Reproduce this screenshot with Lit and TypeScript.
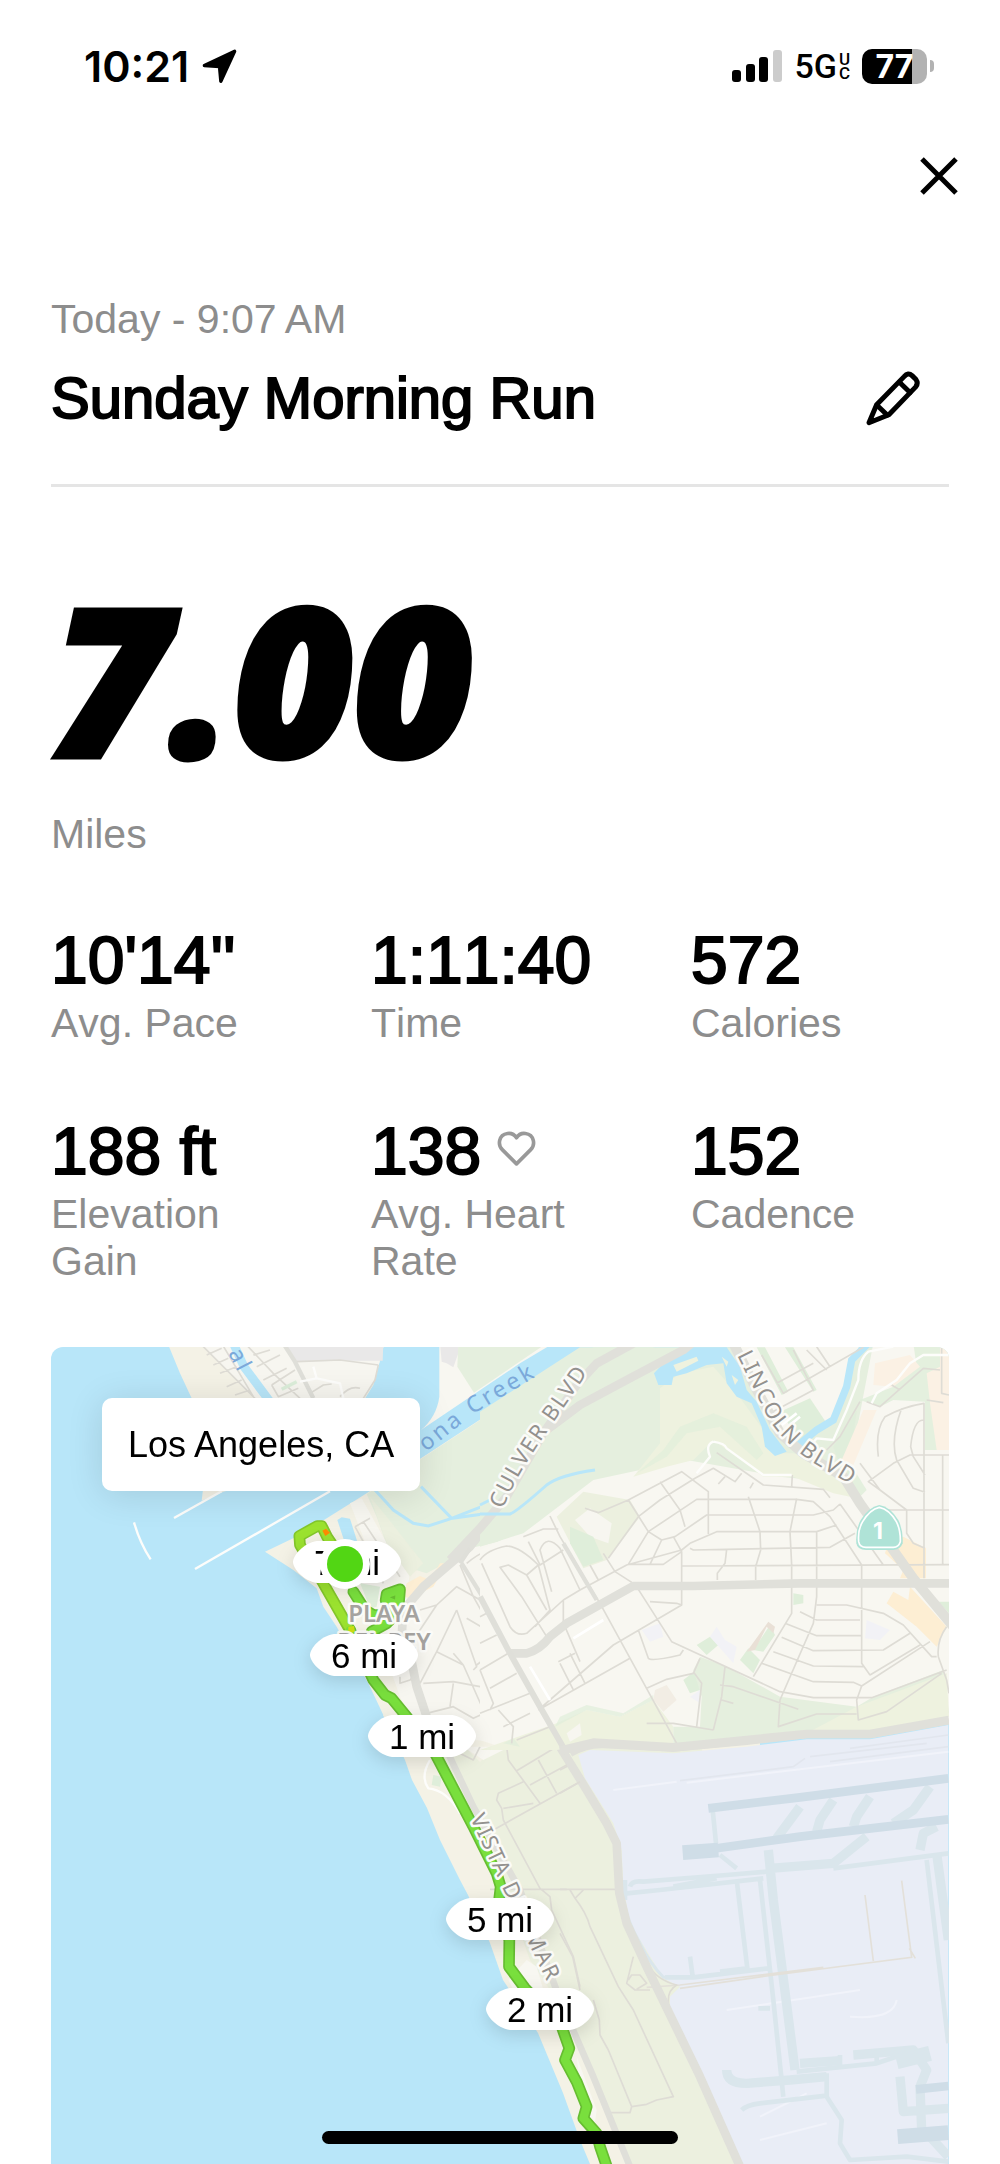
import { LitElement, html, css, svg } from "lit";
import { customElement } from "lit/decorators.js";

interface Stat {
  value: string;
  label: string;
  heart?: boolean;
}

const STATS: Stat[] = [
  { value: "10'14''", label: "Avg. Pace" },
  { value: "1:11:40", label: "Time" },
  { value: "572", label: "Calories" },
  { value: "188 ft", label: "Elevation Gain" },
  { value: "138", label: "Avg. Heart Rate", heart: true },
  { value: "152", label: "Cadence" },
];

interface Pin {
  x: number;
  y: number;
  text: string;
}

const PINS: Pin[] = [
  { x: 347, y: 1562, text: "7 mi" },
  { x: 364, y: 1655, text: "6 mi" },
  { x: 422, y: 1736, text: "1 mi" },
  { x: 500, y: 1919, text: "5 mi" },
  { x: 540, y: 2009, text: "2 mi" },
];

@customElement("run-map")
export class RunMap extends LitElement {
  static styles = css`
    :host {
      display: block;
      position: relative;
      overflow: hidden;
      border-radius: 12px 12px 0 0;
      background: #b8e6f9;
      font-family: "Liberation Sans", Arial, sans-serif;
    }
    .canvas {
      position: absolute;
      inset: 0;
      width: 100%;
      height: 100%;
    }
    .place {
      position: absolute;
      left: 51px;
      top: 51px;
      padding: 24px 26px;
      border-radius: 10px;
      background: #fff;
      box-shadow: 0 4px 36px rgba(0, 0, 0, 0.12);
      font-size: 36px;
      line-height: 45px;
      color: #000;
    }
    .land { fill: #f8f7f1; }
    .block { fill: #f7f6f0; }
    .sand { fill: #f4f2e6; }
    .marsh { fill: #e5efde; }
    .scrub { fill: #ecf0df; }
    .hill { fill: #eef2df; }
    .park { fill: #dfeeda; }
    .shop { fill: #fdeed3; }
    .school { fill: #fbf1e4; }
    .grey { fill: #e9e8e8; }
    .lilac { fill: #f2f2f6; }
    .water { fill: #b8e6f9; }
    .airport { fill: #e9edf6; }
    .stream { fill: none; stroke: #b8e6f9; }
    .minor { fill: none; stroke: #dedcd5; stroke-width: 5; stroke-linejoin: round; }
    .medium { fill: none; stroke: #dfdfd9; stroke-width: 13; stroke-linejoin: round; }
    .major { fill: none; stroke: #e0e0da; stroke-width: 26; stroke-linejoin: round; }
    .white { fill: none; stroke: #fdfdfb; stroke-width: 7; stroke-linejoin: round; }
    .taxi { fill: none; stroke: #dae6ec; stroke-linejoin: round; }
    .runway { fill: none; stroke: #cfdde7; }
    .service { fill: none; stroke: #e3e0d9; stroke-width: 5; }
    .route-edge { fill: none; stroke: #66bd31; stroke-width: 35; stroke-linejoin: round; stroke-linecap: round; }
    .route { fill: none; stroke: #79df3d; stroke-width: 25; stroke-linejoin: round; stroke-linecap: round; }
    .lime { stroke: #9be22f; }
    .lime-edge { stroke: #83c62a; }
    .label {
      font-family: "Noto Sans", sans-serif;
      font-size: 22px;
      letter-spacing: 2px;
      fill: #93918e;
      paint-order: stroke;
      stroke: #fbfbf8;
      stroke-width: 5px;
      stroke-linejoin: round;
    }
    .town { font-weight: 600; font-size: 24px; letter-spacing: 0; fill: #a5a3a0; }
    .river { fill: #7ba9da; stroke: none; font-size: 23px; letter-spacing: 3px; }
    .shield { font-family: Inter, sans-serif; font-weight: 700; font-size: 23px; fill: #fff; }
    .pin { fill: #fff; }
    .pins { filter: drop-shadow(0 5px 9px rgba(0, 0, 0, 0.13)); }
    .pin-text { font-size: 35px; fill: #000; text-anchor: middle; }
  `;

  private north() {
    return svg`
      <g transform="translate(40 1330) scale(.33333)">
        <path class="sand" d="M383 40L420 130L455 205L505 380L490 470L485 512L550 485L870 400L960 230L1000 165L1015 110L1033 40Z"/>
        <path class="block" d="M480 40L650 210L800 300L970 210L1000 160L1015 110L1033 40Z"/>
        <path class="grey" d="M735 40H1030L1028 92L900 92L770 95Z"/>
        <path class="stream" stroke-width="26" d="M580 40L612 110L690 215"/>
        <path class="minor" d="M480 40L650 210M545 40L640 200M615 40L700 130L780 205M500 75L545 55M520 105L565 85M540 130L590 110M560 170L605 150M585 195L630 180M640 75L690 60M650 110L720 75M670 150L740 115M695 165L765 120M695 165L715 200L775 175M770 95L900 90L1015 105M810 190L850 165L875 162M900 200Q930 165 960 175M970 205L1005 150L1015 105"/>
        <path class="medium" d="M730 40L765 95L820 205"/>
        <path d="M725 178L770 155" stroke="#dceeda" stroke-width="10"/>
        <path class="white" d="M820 110L830 145L900 160L910 205M830 145L780 155"/>
        <path class="white" d="M402 564L545 484M465 717L870 484M282 577Q300 640 332 688"/>
        <path class="land" d="M1198 40V200Q1190 260 1143 300L1440 100L1540 40Z"/>
        <path class="grey" d="M1200 40H1255V70L1240 112L1220 100L1205 95Z"/>
        <path class="marsh" d="M1255 40L1252 110L1302 188L1520 40Z"/>
        <path class="sand" d="M675 665L780 615L980 490L1143 385L1440 190L1560 120V1200L1400 1250H1200L1060 1215L1030 1155L985 1060L930 960L890 890L850 830L830 775L760 720Z"/>
        <path class="marsh" d="M980 492L1143 387L1440 192L1660 52H2500V700L1440 640L1290 660L1160 730L1060 700L1010 560Z"/>
        <path class="block" d="M930 520L965 505L1040 640L1110 720L1100 810L1290 655L1440 620V1240L1300 1230L1150 1240L1080 1100L960 760L1000 700Z"/>
        <path class="scrub" d="M990 500L1040 560L1150 700L1110 740L1040 640Z"/>
        <path class="water" d="M892 570L905 562L930 566L955 645L915 640Z"/>
        <path class="shop" d="M1100 760L1140 738L1170 750L1200 700L1220 700L1180 770L1110 805L1090 800Z"/>
        <path class="park" d="M960 760L1020 770L1010 830L990 835Z"/>
        <path class="stream" stroke-width="9" d="M1005 480L1060 540L1120 580L1165 588L1235 565L1350 520M1143 470L1235 565L1330 552L1410 550L1440 535"/>
        <path class="minor" d="M945 590L990 565M945 590L1000 690L1030 760M970 575L1080 740M1260 705L1300 800L1440 1050M1280 700Q1340 650 1400 648L1440 660M1330 700Q1330 760 1380 830L1440 900M1140 840L1190 825L1250 770L1330 815M1190 825L1100 960M1250 840L1190 965L1140 1060M1250 840L1310 1010L1300 1020M1280 865L1400 935L1310 1005M1190 965L1270 1005L1330 1140M1240 970L1270 1005M1150 1060L1240 1055L1320 1070L1440 1000M1160 1150L1240 1130L1300 1165L1420 1110M1240 1060L1230 1130M1380 1060L1400 1160L1440 1190M1080 1040V1060L1110 1050L1130 1030"/>
        <path class="major" d="M1085 920L1090 840L1150 770L1290 650L1360 560L1480 430"/>
        <path class="medium" d="M1260 700L1290 655M1265 700L1340 820L1440 1000"/>
        <path class="major" d="M1110 970L1130 1070L1170 1190L1190 1260"/>
      </g>`;
  }

  private east() {
    return svg`
      <g transform="translate(480 1330) scale(.33333)">
        <path class="land" d="M0 660L150 590L340 430L620 390L900 440L1100 460L1180 40H1407V1170L1170 1212H980L580 1250L250 1240L60 1250L0 1230Z"/>
        <path class="marsh" d="M300 52H520L760 180L850 330L700 310L600 290L480 420L340 450L130 610L0 650V245Z"/>
        <path class="hill" d="M540 175L600 130L700 110L770 190L850 300L880 370L940 370L1010 390L1110 400L1110 500L1060 490L940 440L850 440L700 330L640 390L560 410L460 440L540 340Z"/>
        <path class="park" d="M470 430L550 360L600 290L700 250L800 290L850 370L830 390L720 290L620 310L560 380Z" opacity=".6"/>
        <path class="scrub" d="M230 560L310 485L450 510L480 560L380 690L310 715Z"/>
        <path class="block" d="M285 570L330 535L395 580L385 640L330 620Z"/>
        <path class="park" d="M270 590L340 620L370 690L310 710L270 640Z"/>
        <path class="land" d="M780 40H1140L1090 180L1040 290L940 330L870 250L800 130Z"/>
        <path class="park" d="M830 52L855 52L925 185L905 195ZM915 52L940 52L1010 180L1000 185Z"/>
        <path class="park" d="M900 245L990 205L1040 280L960 330Z"/>
        <path class="water" d="M600 52H740L780 110L800 180L830 215L870 300L920 365L885 378L855 350L845 290L815 220L770 200L740 160L730 100L680 105L620 130L580 140L575 165L535 165L522 130L550 100Z"/>
        <path class="hill" d="M580 105L650 80L655 92L590 125ZM725 80L745 95L740 110ZM755 135L775 150L765 165Z"/>
        <path class="stream" stroke-width="22" d="M1160 45L1115 90L1100 170L1060 270L1010 300L950 350"/>
        <path class="park" d="M1140 210L1200 230L1240 210L1335 215L1335 360H1407V40H1300L1310 110L1240 170ZM1060 350L1130 240L1110 400L1160 480L1140 500L1090 440Z" opacity=".8"/>
        <path class="school" d="M1185 100L1290 75L1320 110L1240 170L1180 165ZM1340 130L1380 110V52H1407V360H1370L1350 220ZM1150 240L1190 240L1120 405L1085 390Z"/>
        <path class="shop" d="M1230 620L1270 620L1338 655V745H1260L1270 720L1215 670ZM1220 820L1240 785L1285 810L1290 770L1400 890L1370 950L1310 890Z"/>
        <path class="park" d="M940 790L970 795V820L940 825ZM650 945L690 920L715 945L680 975ZM870 885L820 960L850 965L885 915ZM780 990L805 955L840 990L820 1030ZM610 1050L655 1015L660 1080L630 1090ZM1375 815H1407V850Z"/>
        <path d="M865 875L885 890L880 910L860 890L825 960L800 965Z" fill="#e9e0d6"/>
        <path class="lilac" d="M485 900L540 880L550 920L510 935ZM1160 870L1230 900L1200 930L1155 925ZM690 920L710 890L735 930L770 950L760 1000ZM630 1100L660 1080V1120Z"/>
        <path d="M525 1080L560 1065L590 1110L550 1145L520 1110Z" fill="#f2ede4"/>
        <path class="hill" d="M0 1260L230 1180L320 1140L420 1160L520 1110L580 1190V1250L340 1240L230 1260Z"/>
        <path class="park" d="M225 1190L320 1140L420 1160L520 1110L520 1095L430 1150L320 1125L240 1160ZM70 1240L100 1225L120 1250Z" opacity=".7"/>
        <path class="block" d="M260 1210L300 1180L305 1215L270 1235Z"/>
        <path class="marsh" d="M660 980L740 1010L900 1100L1130 1130L1180 1100L1390 1020L1407 1150L1180 1205L900 1220L580 1245L580 1190L660 1190L665 1100L640 1020Z"/>
        <path class="hill" d="M1130 1130L1400 1030L1407 1160L1140 1205L980 1210Z"/>

        <path class="minor" d="M210 558L240 620L360 820L590 1240M130 620L190 597H235M145 635L180 705L250 660M0 690Q20 660 80 648Q120 650 175 705L140 735L85 705L60 712L125 800L200 920M5 700L50 800L90 890Q110 920 140 910L250 810V890M175 705L210 840L165 890M215 785L180 660Q200 610 240 655L300 780L250 810M140 735L200 840M300 780L440 705L605 660L630 640L710 605H1010L1070 585M330 705L355 750M370 670L405 725L460 760M315 535L355 548L445 510L605 425L685 485V612M385 685L475 560L540 510L645 445M445 510L505 605L545 630L585 620L680 555H1000L1060 540L1080 522M540 455L600 540L615 590M445 703L505 605L650 508H950L1000 515L1050 560L1145 705V1000L1170 1035M510 703L545 630M445 703H550L605 665V825L400 945L175 1140M605 665L580 620M630 655L640 660L740 658L1050 652L1125 610M605 708L1407 704M740 658L735 700L712 730V750M645 445L700 415L765 455L785 430M710 368L850 465L1030 478L1050 503M715 462L735 440M810 475L820 458M805 500L840 605L842 660L827 710V750M950 505L930 605L935 705V850L820 1040M937 435L935 470M1010 605V800L1000 880L900 1110L895 1190L1010 1152H1130M1080 522L1210 705M1010 825H1100L1210 850L1270 885L1355 980H1370M960 845L1010 870H1140M915 880L1010 917H1145M905 922L1000 962L1210 960L1290 910M880 965L1000 1008L1150 1010M845 1000L1000 1055L1120 1057L1145 1068M475 778L575 935L900 1085L1000 1103H1175L1400 1020M475 900L505 985Q515 995 600 975L610 960M510 815L590 820L605 825M175 1140L450 985M300 995L255 890M235 995L285 970M240 1000L280 1080M270 970L315 1060M500 1075L560 1048L640 1030L660 985M640 1025L665 1060L650 1190M700 1200L725 1100L735 1010M500 1180L580 1180L700 1200M720 1065L760 1070L955 1138M725 1110L760 1120M1145 1068L1130 1110L1135 1170L1220 1145L1385 1030M1145 1068L1350 935M1170 1035L1320 945M1400 890Q1370 930 1375 980L1400 1050L1407 1090M1200 480L1165 455L1240 400L1290 375H1407M1195 380Q1185 300 1215 260Q1270 230 1332 220V745M1265 235Q1230 330 1250 390L1300 475L1335 487M1330 270Q1300 270 1292 350L1300 380L1335 435M1140 400L1200 480L1280 540V610L1300 640L1335 655M1200 540H1407M1388 375V703M845 75L910 190L1150 52M980 60L1040 120M1010 50L1050 110M890 160L1000 100M870 250L1000 180L940 60M1160 215L1200 230L1330 115L1380 120M1140 215L1080 320L1040 360M1385 52V190L1407 195M1340 210L1390 218M1235 165L1260 180M0 860L20 850M0 940L50 915M0 1020L85 970M30 1075L110 1030M0 1150L150 1090M55 1140L100 1190L95 1240M70 1190L150 1150M110 1230L210 1190M0 1020L40 1120L30 1140"/>
        <path class="white" d="M700 335Q735 340 740 355L850 435H935M700 335Q675 345 690 380L650 430M1407 75H1330L1290 100L1250 150L1190 190L1175 220M1240 50L1165 65Q1135 90 1135 150L1100 240L1060 330L1010 325L990 350"/>
        <path d="M905 285L950 250M930 285L960 260M280 925L370 870M150 1010L210 1110" stroke="#fff" stroke-width="8" fill="none"/>
        <path class="major" d="M-90 690L0 595L80 500L190 310L290 165L350 100L460 40M200 300L300 225L440 150L610 60L660 20"/>
        <path class="major" d="M760 40L820 160L900 310L970 370L1090 440L1140 520L1300 745L1420 890" style="stroke-width:30"/>
        <path class="major" d="M90 970H140Q180 960 210 920L260 880L460 768H640L960 760H1407"/>
        <path class="medium" d="M0 800L90 970L180 1130L260 1270" style="stroke-width:18"/>
        <path class="medium" d="M250 640L350 810"/>
        <path class="major" d="M240 1262L340 1238L580 1252L980 1212H1170L1407 1170"/>
        <path class="stream" stroke-width="9" d="M0 525L30 510M0 552H90Q110 545 200 465Q240 435 345 420"/>

        <path d="M1198 525Q1230 530 1255 570Q1270 600 1268 640Q1262 658 1240 660H1158Q1132 660 1129 640Q1126 600 1142 570Q1165 532 1198 525Z" fill="#afe3d7"/>
        <path d="M1198 532Q1228 538 1249 575Q1262 600 1261 635Q1256 651 1240 652H1158Q1139 652 1136 635Q1133 600 1148 575Q1170 538 1198 532Z" fill="none" stroke="#fff" stroke-width="5"/>
      </g>
      <text class="shield" x="873" y="1539">1</text>`;
  }

  private south() {
    return svg`
      <path class="sand" d="M383 1715L405 1760L412 1780L427 1808L440 1840L460 1880L468 1895L490 1943L503 1980L538 2033L563 2093L580 2140L590 2164H760V1715Z"/>
      <path class="scrub" d="M430 1747L458 1740L480 1762L500 1740L560 1735L700 1735L760 2170H632L570 2020L530 1960L505 1890L470 1820Z"/>
      <g transform="translate(560 1700) scale(.33333)">
        <path class="airport" d="M55 165L90 150L340 160L560 140L740 118H930L1165 75V1400H540L430 1150L330 960V890L360 860L310 835L210 670L190 560L185 450L160 370L75 235Z"/>
        <path fill="none" stroke="#e2e6ee" stroke-width="5" d="M360 242L700 200L735 175M810 185L1165 140M750 170L1100 130M870 145L1165 105"/>
        <path fill="none" stroke="#f1f3fa" stroke-width="6" d="M380 248L1165 155M160 270L350 245M500 930L900 870M870 950Q1000 960 1010 900M600 1250Q700 1200 740 1180M600 1320L800 1270"/>
        <path class="taxi" stroke-width="14" d="M458 330L468 430M480 465L530 505M200 580L300 570L610 535M195 540V600M210 560Q215 540 250 545L500 525L620 515M340 560L470 535M600 540L640 900L670 1190M530 540L562 805L480 815M390 770L398 830M315 832H400L625 805M800 1120V1190L845 1260L840 1330L870 1380L1040 1370L1165 1385M545 1230Q560 1215 600 1210L800 1187M595 925H630M840 1065V1100M950 1060V1090M820 505L1165 460M1100 480L1165 1030M710 1115L950 1090L1040 1060"/>
        <path class="taxi" stroke-width="28" d="M625 450L640 600L705 1110M1130 460L1165 720M630 505L820 490L920 410M650 415L720 320M770 395L780 360L820 300M880 380L890 350L930 290M1080 450L1090 400L1130 380M1000 370L1060 330L1110 260M500 1110Q500 1150 560 1150L690 1140M690 1140L800 1130M720 1090L840 1082M880 1065L1000 1055L1060 1050L1100 1110L1080 1160L1085 1290M1020 1130L1030 1235L1165 1225M1110 1310L1165 1370"/>
        <path class="taxi" stroke-width="46" d="M1010 1085L1110 1060" />
        <path class="runway" stroke-width="26" d="M445 325L720 292L1165 235M470 445L720 410L1165 358M1068 1168L1165 1158"/>
        <path class="runway" stroke-width="44" d="M368 458L475 450M1013 1310L1165 1298"/>
        <path class="service" d="M260 862L360 855L790 802M360 865L620 828L1055 772L1025 542M940 783L915 585M1048 745L1066 775"/>
        <path d="M190 600Q200 660 240 730Q270 790 310 832H350" fill="none" stroke="#dae6ec" stroke-width="9"/>
        <path class="minor" d="M0 210L40 190M0 280L70 240M0 568H165M30 570L45 595L70 570M45 595Q80 640 90 680L175 860L220 930L340 1190L290 1200L260 1213L215 1220L210 1238H150M0 700L38 770L60 870M100 900L118 960L120 1005L145 1050L215 1220M220 770L200 850L225 870H270M205 840L215 825H240L260 850L230 868M260 790Q290 840 350 855Q325 870 325 900V940"/>
        <path class="major" d="M-30 85L0 140L80 270L140 370L170 430L178 580L200 670L260 800L420 1130L540 1400"/>
        <path class="major" d="M30 158Q80 130 130 132L340 142L560 122L740 102H930L1165 60"/>
      </g>
      <g transform="translate(380 1740) scale(.33333)">
        <path class="land" d="M270 0H380L370 30L310 60L250 20ZM440 660L470 680L490 750H400L385 720ZM590 950L650 1110L640 1180L600 1040Z" />
        <path class="park" d="M160 105L185 110L180 140L155 135ZM375 0H410L415 20L390 25Z"/>
        <path class="white" d="M150 60Q120 110 145 145Q200 150 240 220"/>
        <path class="minor" d="M200 20L280 60L300 20M380 20L385 60L480 190M410 92L530 20M450 135L560 75M475 60L530 160M340 270L600 125M430 125L355 160L350 180L365 205L370 240L480 445L510 470L515 510L580 650L600 740M370 205L460 190M330 448H560"/>
        <path class="medium" d="M195 20L280 200L420 450L540 780L640 1010L750 1280" style="stroke-width:20"/>
      </g>`;
  }

  private route() {
    const loop = "M315 190L262 112L245 78L232 78L178 108L180 135L250 250L330 390";
    const inner = "M340 275L375 330L400 345L450 345L475 330L480 268L440 282L437 300L460 310L465 345L440 370L395 395";
    const coast = "M330 390L400 540L435 585L455 595L500 650L555 720L585 760";
    const beach = "M165 40L280 260L350 400L362 440L356 490L388 600L387 680L435 745L545 860L568 925L555 960L590 1025L620 1100L610 1135L650 1180L660 1220L684 1290";
    return svg`
      <g transform="translate(240 1500) scale(.33333)">
        <path class="route-edge" d=${inner}/>
        <path class="route-edge lime-edge" d=${loop}/>
        <path class="route-edge" d=${coast}/>
        <path class="route" d=${inner}/>
        <path class="route lime" d=${loop}/>
        <path class="route" d=${coast}/>
        <path d="M247 92L258 86L270 98L256 108Z" fill="#ff8a00"/>
        <path d="M325 380L342 378L345 395L325 400Z" fill="#cfdf10"/>
      </g>
      <g transform="translate(380 1740) scale(.33333)">
        <path class="route-edge" d=${beach}/>
        <path class="route" d=${beach}/>
      </g>`;
  }

  private labels() {
    return svg`
      <defs>
        <path id="culver" d="M503 1509Q512 1484 540 1442L606 1346"/>
        <path id="lincoln" d="M737 1355L768 1418Q784 1444 815 1464L880 1502"/>
        <path id="vista" d="M470 1818L510 1904L570 2030"/>
        <path id="creek" d="M426 1452L475 1413L545 1371"/>
        <path id="canal" d="M228 1353L254 1403"/>
      </defs>
      <text class="label"><textPath href="#culver">CULVER BLVD</textPath></text>
      <text class="label"><textPath href="#lincoln">LINCOLN BLVD</textPath></text>
      <text class="label"><textPath href="#vista">VISTA DEL MAR</textPath></text>
      <text class="label river"><textPath href="#creek">ona Creek</textPath></text>
      <text class="label river"><textPath href="#canal">al</textPath></text>
      <text class="label town" text-anchor="middle" x="384" y="1622">PLAYA</text>
      <text class="label town" text-anchor="middle" x="384" y="1650">DEL REY</text>`;
  }

  render() {
    return html`
      <svg class="canvas" viewBox="51 1347 898 817" preserveAspectRatio="xMidYMin slice" role="img" aria-label="Route map">
        ${this.south()} ${this.north()} ${this.east()} ${this.route()} ${this.labels()}
        <g class="pins">
          ${PINS.map(
            (p) => svg`<g transform="translate(${p.x} ${p.y})">
              <path class="pin" d="M-30 -21H30C44 -19 54 -6 54 0S44 19 30 21H-30C-44 19 -54 6 -54 0S-44 -19 -30 -21Z"/>
              <text class="pin-text" y="13">${p.text}</text>
            </g>`
          )}
        </g>
        <circle cx="345" cy="1564" r="25" fill="#fff"/>
        <circle cx="345" cy="1564" r="18" fill="#52d614"/>
      </svg>
      <div class="place">Los Angeles, CA</div>
    `;
  }
}

@customElement("app-root")
export class AppRoot extends LitElement {
  static styles = css`
    :host {
      display: flex;
      flex-direction: column;
      position: relative;
      box-sizing: border-box;
      min-height: 100vh;
      background: #fff;
      color: #000;
      font-family: "Liberation Sans", Arial, sans-serif;
    }
    .status {
      display: flex;
      align-items: center;
      justify-content: space-between;
      padding: 40px 66px 0 84px;
      height: 52px;
      font-family: Inter, sans-serif;
    }
    .clock, .signal {
      display: flex;
      align-items: center;
    }
    .clock { gap: 12px; font-size: 43px; line-height: 52px; font-weight: 600; }
    .arrow { width: 37px; height: 37px; }
    .signal { gap: 12px; }
    .bars { width: 50px; height: 32px; }
    .network { display: flex; align-items: center; gap: 2px; font-family: Roboto, sans-serif; font-size: 34px; line-height: 36px; font-weight: 500; }
    .uc { display: flex; flex-direction: column; font-size: 17px; line-height: 14px; }
    .battery { display: flex; align-items: center; gap: 3px; }
    .cell {
      width: 65px;
      border-radius: 10px;
      background: linear-gradient(90deg, #000 77%, #b2b2b2 77%);
      color: #fff;
      text-align: center;
      font-size: 32px;
      line-height: 35px;
      font-weight: 700;
    }
    .cap { width: 4px; height: 12px; border-radius: 0 6px 6px 0; background: #b2b2b2; }
    .nav { display: flex; justify-content: flex-end; padding: 54px 31px 0; }
    .icon-button { display: flex; padding: 0; border: 0; background: none; color: #000; }
    .close { width: 60px; height: 60px; }
    .content { display: flex; flex-direction: column; flex: 1; padding: 90px 51px 0; }
    .muted { color: #8d8d8d; font-size: 41px; line-height: 47px; margin: 0; }
    .head { border-bottom: 3px solid #e5e5e5; padding-bottom: 54px; }
    .title-row { display: flex; align-items: center; justify-content: space-between; padding: 23px 26px 0 0; }
    .title { margin: 0; font-size: 58px; line-height: 64px; font-weight: 400; -webkit-text-stroke: 2px #000; }
    .pencil { width: 58px; height: 58px; }
    .distance {
      margin: 110px 0 54px;
      font-family: "Open Sans", sans-serif;
      font-size: 206px;
      line-height: 160px;
      font-weight: 800;
      font-style: italic;
      -webkit-text-stroke: 5px #000;
    }
    .stats {
      display: grid;
      grid-template-columns: repeat(3, 1fr);
      gap: 68px 62px;
      margin: 66px 0 62px;
      font-kerning: none;
    }
    .stat { display: flex; flex-direction: column-reverse; justify-content: flex-end; gap: 4px; }
    .value {
      display: flex;
      align-items: center;
      gap: 14px;
      margin: 0;
      font-size: 66px;
      line-height: 72px;
      white-space: nowrap;
      -webkit-text-stroke: 2px #000;
    }
    .heart { width: 43px; height: 40px; padding-bottom: 6px; }
    .map { flex: 1; min-height: 320px; }
    .home {
      position: absolute;
      left: 50%;
      bottom: 20px;
      width: 356px;
      height: 13px;
      margin-left: -178px;
      border-radius: 7px;
      background: #000;
    }
  `;

  render() {
    return html`
      <div class="status">
        <div class="clock">
          <span>10:21</span>
          <svg class="arrow" viewBox="455 85 110 110"><path d="M465 137L555 95L514 184L510 140Z" stroke="#000" stroke-width="10" stroke-linejoin="round"/></svg>
        </div>
        <div class="signal">
          <svg class="bars" viewBox="0 0 50 32">
            <rect y="20" width="9" height="12" rx="3"/>
            <rect x="14" y="14" width="9" height="18" rx="3"/>
            <rect x="27" y="7" width="9" height="25" rx="3"/>
            <rect x="41" width="9" height="32" rx="3" fill="#ccc"/>
          </svg>
          <div class="network"><span>5G</span><span class="uc"><span>U</span><span>C</span></span></div>
          <div class="battery"><span class="cell">77</span><span class="cap"></span></div>
        </div>
      </div>
      <div class="nav">
        <button class="icon-button" aria-label="Close">
          <svg class="close" viewBox="0 0 60 60"><path d="M13 13L47 47M47 13L13 47" stroke="#000" stroke-width="5"/></svg>
        </button>
      </div>
      <main class="content">
        <header class="head">
          <p class="muted">Today - 9:07&#8201;AM</p>
          <div class="title-row">
            <h1 class="title">Sunday Morning Run</h1>
            <button class="icon-button" aria-label="Edit title">
              <svg class="pencil" viewBox="45 30 175 175" fill="none" stroke="#000" stroke-width="15" stroke-linejoin="round" stroke-linecap="round">
                <path d="M57 192L80 138L163 53Q175 39 187 50L199 62Q207 73 198 84L117 168Z"/>
                <path d="M149 70L181 101M82 140L112 169"/>
              </svg>
            </button>
          </div>
        </header>
        <div class="distance">7.00</div>
        <p class="muted">Miles</p>
        <dl class="stats">
          ${STATS.map(
            (s) => html`<div class="stat">
              <dt class="muted">${s.label}</dt>
              <dd class="value">
                ${s.value}${s.heart
                  ? html`<svg class="heart" viewBox="400 52 130 120" fill="none" stroke="#999" stroke-width="11" stroke-linejoin="round"><path d="M465 160L422 117C408 103 410 72 438 68C452 66 460 73 465 81C470 73 478 66 492 68C520 72 522 103 508 117Z"/></svg>`
                  : null}
              </dd>
            </div>`
          )}
        </dl>
        <run-map class="map"></run-map>
      </main>
      <div class="home"></div>
    `;
  }
}
